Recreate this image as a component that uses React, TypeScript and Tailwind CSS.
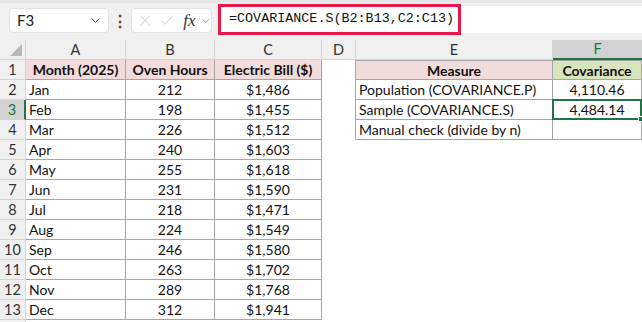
import React from 'react';
import { ChevronDown, X, Check } from 'lucide-react';

const rows: [string, number, string][] = [
  ['Jan', 212, '$1,486'],
  ['Feb', 198, '$1,455'],
  ['Mar', 226, '$1,512'],
  ['Apr', 240, '$1,603'],
  ['May', 255, '$1,618'],
  ['Jun', 231, '$1,590'],
  ['Jul', 218, '$1,471'],
  ['Aug', 224, '$1,549'],
  ['Sep', 246, '$1,580'],
  ['Oct', 263, '$1,702'],
  ['Nov', 289, '$1,768'],
  ['Dec', 312, '$1,941'],
];

const measures: [string, string][] = [
  ['Population (COVARIANCE.P)', '4,110.46'],
  ['Sample (COVARIANCE.S)', '4,484.14'],
  ['Manual check (divide by n)', ''],
];

const cols = ['A', 'B', 'C', 'D', 'E', 'F'];

const hdr = 'flex items-center justify-center bg-[#f0f0f0] border-r border-b border-[#d4d4d4] text-[#333] text-[14.5px]';
const data = 'flex items-center border-r border-b border-[#a6a6a6] overflow-hidden whitespace-nowrap';

export default function App() {
  return (
    <div className="w-[642px] h-[322px] overflow-hidden bg-white text-[14px] text-[#111]" style={{ fontFamily: 'Lato, "Open Sans", sans-serif' }}>
      {/* formula bar */}
      <div className="h-[40px] bg-[#f0f0f0] border-t-[3px] border-[#e6e6e6] flex items-start pt-[5px] relative">
        <div className="ml-[9px] w-[100px] h-[25px] bg-white rounded-[4px] border border-[#e2e2e2] flex items-center justify-between pl-[7px] pr-[5px]">
          <span className="text-[15px] text-[#222]">F3</span>
          <ChevronDown size={15} strokeWidth={1.6} className="text-[#444]" />
        </div>
        <div className="w-[22px] h-[25px] flex items-center justify-center text-[#444] text-[16px] font-bold">⋮</div>
        <div className="w-[81px] h-[25px] bg-white rounded-[4px] border border-[#e2e2e2] flex items-center pl-[4px] gap-[4px]">
          <X size={19} strokeWidth={1.1} className="text-[#c4c4c4]" />
          <Check size={19} strokeWidth={1.1} className="text-[#c4c4c4]" />
          <span className="italic text-[17px] text-[#333] ml-[3px] leading-none" style={{ fontFamily: '"Liberation Serif", serif' }}>fx</span>
          <ChevronDown size={12} strokeWidth={1.6} className="text-[#777]" />
        </div>
        <div className="ml-[8px] flex-1 h-[27px] -mt-[2px] bg-white flex items-center">
          <div className="h-[31px] w-[243px] border-[3px] border-[#e8194a] flex items-center pl-[8px] -ml-[2px]">
            <span className="text-[13.4px] text-[#111]" style={{ fontFamily: '"Liberation Mono", monospace' }}>=COVARIANCE.S(B2:B13,C2:C13)</span>
          </div>
        </div>
      </div>

      {/* grid */}
      <div className="grid grid-cols-[26px_100px_89px_107px_34px_197px_89px] auto-rows-[20px]">
        <div className={`${hdr} relative`}>
          <div className="absolute right-[3px] bottom-[3px] w-0 h-0 border-l-[12px] border-l-transparent border-b-[12px] border-b-[#b8b8b8]" />
        </div>
        {cols.map((c) =>
          c === 'F' ? (
            <div key={c} className="flex items-center justify-center bg-[#d2d2d2] border-b-2 border-[#217346] text-[#217346] text-[14.5px]">{c}</div>
          ) : (
            <div key={c} className={hdr}>{c}</div>
          )
        )}

        {/* row 1 */}
        <div className={hdr}>1</div>
        <div className={`${data} justify-center bg-[#f2dcdb] font-bold`}>Month (2025)</div>
        <div className={`${data} justify-center bg-[#f2dcdb] font-bold`}>Oven Hours</div>
        <div className={`${data} justify-center bg-[#f2dcdb] font-bold`}>Electric Bill ($)</div>
        <div className="border-r border-[#a6a6a6]" />
        <div className={`${data} justify-center bg-[#f2dcdb] font-bold border-t`}>Measure</div>
        <div className={`${data} justify-center bg-[#d8e4bc] font-bold border-t`}>Covariance</div>

        {rows.map(([m, h, b], i) => {
          const r = i + 2;
          const meas = measures[i];
          const sel = r === 3;
          return (
            <React.Fragment key={m}>
              {sel ? (
                <div className="flex items-center justify-center bg-[#d2d2d2] border-r-2 border-[#217346] text-[#217346] border-b border-b-[#d4d4d4] text-[14.5px]">{r}</div>
              ) : (
                <div className={hdr}>{r}</div>
              )}
              <div className={`${data} pl-[3px]`}>{m}</div>
              <div className={`${data} justify-center`}>{h}</div>
              <div className={`${data} justify-center`}>{b}</div>
              <div className={meas ? 'border-r border-[#a6a6a6]' : ''} />
              {meas ? (
                <>
                  <div className={`${data} pl-[3px]`}>{meas[0]}</div>
                  {sel ? (
                    <div className="relative flex items-center justify-center border-2 border-[#217346] -mt-px -ml-px">
                      {meas[1]}
                      <div className="absolute -right-[4px] -bottom-[4px] w-[6px] h-[6px] bg-[#217346] border border-white" />
                    </div>
                  ) : (
                    <div className={`${data} justify-center`}>{meas[1]}</div>
                  )}
                </>
              ) : (
                <>
                  <div />
                  <div />
                </>
              )}
            </React.Fragment>
          );
        })}
        <div className={hdr} />
      </div>
    </div>
  );
}
